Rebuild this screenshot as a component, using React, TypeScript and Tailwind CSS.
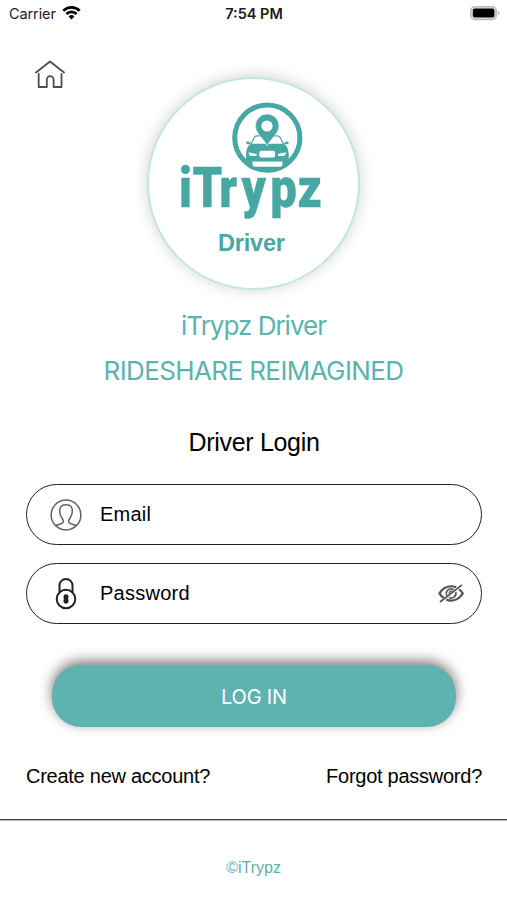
import { useState } from "react";

function StatusBar() {
  return (
    <div className="flex h-7 items-center justify-between pl-[9px] pr-[7px] text-[#1c1c1c]">
      <div className="flex w-40 items-center gap-[6px]">
        <span className="text-[14.5px] leading-none tracking-[-0.1px]">Carrier</span>
        <svg width="19" height="15" viewBox="0 0 19 15" fill="none" stroke="#000" strokeWidth="2.7" className="mb-[3px]">
          <path d="M1.3 5.7a11.6 11.6 0 0 1 16.4 0" />
          <path d="M4.4 9a7.2 7.2 0 0 1 10.2 0" />
          <path d="M9.5 14.4L6.6 11.4a4.1 4.1 0 0 1 5.8 0z" fill="#000" stroke="none" />
        </svg>
      </div>
      <span className="-ml-px text-[14.5px] font-semibold leading-none">7:54 PM</span>
      <div className="flex w-40 justify-end">
        <svg width="30" height="15" viewBox="0 0 30 15" className="mb-[2px]">
          <rect x="0.8" y="0.8" width="25.4" height="12.6" rx="4" fill="#e4e4e4" stroke="#b9b9b9" strokeWidth="1.5" />
          <rect x="2.8" y="2.6" width="21.6" height="9" rx="1.8" fill="#000" />
          <path d="M27.8 4.8c2.2 1 2.2 3.8 0 4.8z" fill="#b9b9b9" />
        </svg>
      </div>
    </div>
  );
}

function Logo() {
  return (
    <svg viewBox="1.5 1.5 209 209" className="h-full w-full" fill="#47a7a2">
      <circle cx="119.8" cy="60.2" r="32.6" fill="none" stroke="#47a7a2" strokeWidth="5" />
      <path d="M103.3 67l3.4-7q.9-1.7 3-1.7h20q2.1 0 3 1.7l3.4 7" fill="none" stroke="#47a7a2" strokeWidth="1.2" />
      <path d="M98.7 64.3q3-1.2 4.4 1.2l-.4 1.3q-2.6.2-4-.9zM141 64.3q-3-1.2-4.4 1.2l.4 1.3q2.6.2 4-.9z" />
      <path d="M103 66.3h33.6c3 2.5 4.6 6.2 4.6 10.7v9l-6 5h-30.7l-6-5v-9c0-4.5 1.5-8.2 4.5-10.7z" />
      <path d="M119.7 68.5c-2.5-6.5-11.8-12-11.8-20.2a11.8 11.8 0 0 1 23.6 0c0 8.2-9.3 13.7-11.8 20.2z" stroke="#fff" strokeWidth="0.6" />
      <circle cx="119.5" cy="48.5" r="5.6" fill="#fff" />
      <rect x="111.8" y="73.3" width="15.8" height="6.6" rx="2" fill="#fff" />
      <path d="M101 74.8l8.4 1.8-.6 2h-5.4q-2.2-.6-2.4-3.8zM138.6 74.8l-8.4 1.8.6 2h5.4q2.2-.6 2.4-3.8z" fill="#fff" />
      <path d="M105 84h30v2.8q0 2-2 2.5h-26q-2-.5-2-2.5z" fill="#fff" />
      <text transform="scale(0.85 1)" y="129.7" x="37 53 84.5 110.5 144.5 176.5" fontFamily="Roboto, sans-serif" fontWeight="900" fontSize="55.5" stroke="#47a7a2" strokeWidth="0.4">iTrypz</text>
      <text x="70.5" y="173.2" textLength="67" fontFamily="Liberation Sans, sans-serif" fontWeight="700" fontSize="23.5">Driver</text>
    </svg>
  );
}

function HomeIcon() {
  return (
    <svg width="30" height="29" viewBox="0 0 30 29" fill="none" stroke="#4d4d4d" strokeWidth="1.8" strokeLinecap="round" strokeLinejoin="round">
      <path d="M1 12.5L15 1.5l14 11" />
      <path d="M3.700 14v13h8.100v-7.500a3.400 3.400 0 0 1 6.800 0V27h7.900V14" />
    </svg>
  );
}

function UserIcon() {
  return (
    <svg width="32" height="32" viewBox="0 0 32 32" fill="none" stroke="#606060" strokeWidth="1.5" className="shrink-0">
      <circle cx="16" cy="16" r="14.9" />
      <path d="M5.300 27c2-1.800 7.800-1.400 8.100-4.500.2-2.400-3.600-4.600-3.700-9.500C9.500 8.500 10.800 5.700 16 5.700s6.500 2.800 6.300 7.300c-.1 4.900-3.900 7.100-3.700 9.500.3 3.100 6.100 2.700 8.100 4.500" />
    </svg>
  );
}

function LockIcon() {
  return (
    <svg width="22" height="32" viewBox="0 0 22 32" fill="none" stroke="#222" strokeWidth="2" className="shrink-0">
      <circle cx="11" cy="21" r="9.3" />
      <path d="M4.500 14V7.500a6.500 6.500 0 0 1 13 0V14" />
      <path d="M11 16.300a2.500 2.500 0 0 1 2.100 4q1.500 5.400-2.100 5.400t-2.100-5.400a2.500 2.500 0 0 1 2.100-4z" fill="#222" stroke="none" />
    </svg>
  );
}

function EyeOffIcon() {
  return (
    <svg width="26" height="19" viewBox="0 0 26 19" fill="none" stroke="#555" strokeWidth="2.2">
      <path d="M18.200 3.200C12 .8 5.500 3 1.400 9.400c1.200 2 2.700 3.400 4.300 4.500" />
      <path d="M8.300 15.600c6.200 2.400 12.500.2 16.400-6.200-1-1.700-2.200-3-3.600-4" />
      <path d="M15.800 5.600a4.800 4.800 0 0 0-7 6M11 13.500a4.800 4.800 0 0 0 6.800-5.600" strokeWidth="1.6" />
      <path d="M14.300 7a2.300 2.300 0 0 0-3 2.600" strokeWidth="1.4" />
      <path d="M2 18L24 .8" strokeWidth="1.7" />
    </svg>
  );
}

export default function App() {
  const [email, setEmail] = useState("");
  const [password, setPassword] = useState("");
  const [showPassword, setShowPassword] = useState(false);

  return (
    <div className="flex h-[900px] w-[507px] flex-col overflow-hidden bg-white font-['Inter',sans-serif]">
      <StatusBar />
      <div className="px-[35px] pt-8">
        <button className="block"><HomeIcon /></button>
      </div>

      <div className="-mt-3 flex flex-col items-center">
        <div className="h-[213px] w-[213px] rounded-full border-2 border-[#c3e6de] bg-white shadow-[0_-1px_15px_rgba(0,0,0,0.18)]">
          <Logo />
        </div>
        <h1 className="mt-[13px] text-[26px] font-normal leading-[45px] tracking-[-1px] text-[#5bb3ae]">iTrypz Driver</h1>
        <h2 className="text-[26px] font-normal leading-[45px] tracking-[-0.6px] text-[#5bb3ae]">RIDESHARE REIMAGINED</h2>
      </div>

      <form className="mt-[31px] flex flex-col pl-[26px] pr-[25px] font-['Liberation_Sans',sans-serif] text-black" onSubmit={(e) => e.preventDefault()}>
        <h3 className="text-center text-[25px] leading-9 tracking-[-0.3px]">Driver Login</h3>
        <label className="mt-6 flex h-[61px] items-center rounded-full border border-[#222] pl-[23px] pr-4">
          <UserIcon />
          <input
            className="mb-px ml-[18px] w-full min-w-0 text-[20px] tracking-[0.25px] outline-none placeholder:text-black"
            placeholder="Email"
            value={email}
            onChange={(e) => setEmail(e.target.value)}
          />
        </label>
        <label className="mt-[18px] flex h-[61px] items-center rounded-full border border-[#222] pl-7 pr-[17px]">
          <LockIcon />
          <input
            className="mb-px ml-[23px] w-full min-w-0 text-[20px] tracking-[0.25px] outline-none placeholder:text-black"
            type={showPassword ? "text" : "password"}
            placeholder="Password"
            value={password}
            onChange={(e) => setPassword(e.target.value)}
          />
          <button type="button" className="shrink-0" onClick={() => setShowPassword(!showPassword)}><EyeOffIcon /></button>
        </label>
        <button className="mx-[26px] mt-[41px] h-[62px] rounded-[29px] bg-[#5eb3b0] pt-px font-['Inter',sans-serif] text-[20px] font-normal tracking-[-0.2px] text-white shadow-[0_-4px_13px_rgba(0,0,0,0.52)]">
          LOG IN
        </button>
        <div className="mt-[34px] flex justify-between text-[20px] leading-[30px] tracking-[-0.26px]">
          <a>Create new account?</a>
          <a>Forgot password?</a>
        </div>
      </form>

      <footer className="mt-7 flex grow items-center justify-center border-t border-[#444] pt-[15px] font-['Liberation_Sans',sans-serif] text-[16px] text-[#5bb3ae] shadow-[inset_0_1px_0_#bbb]">
        ©iTrypz
      </footer>
    </div>
  );
}
